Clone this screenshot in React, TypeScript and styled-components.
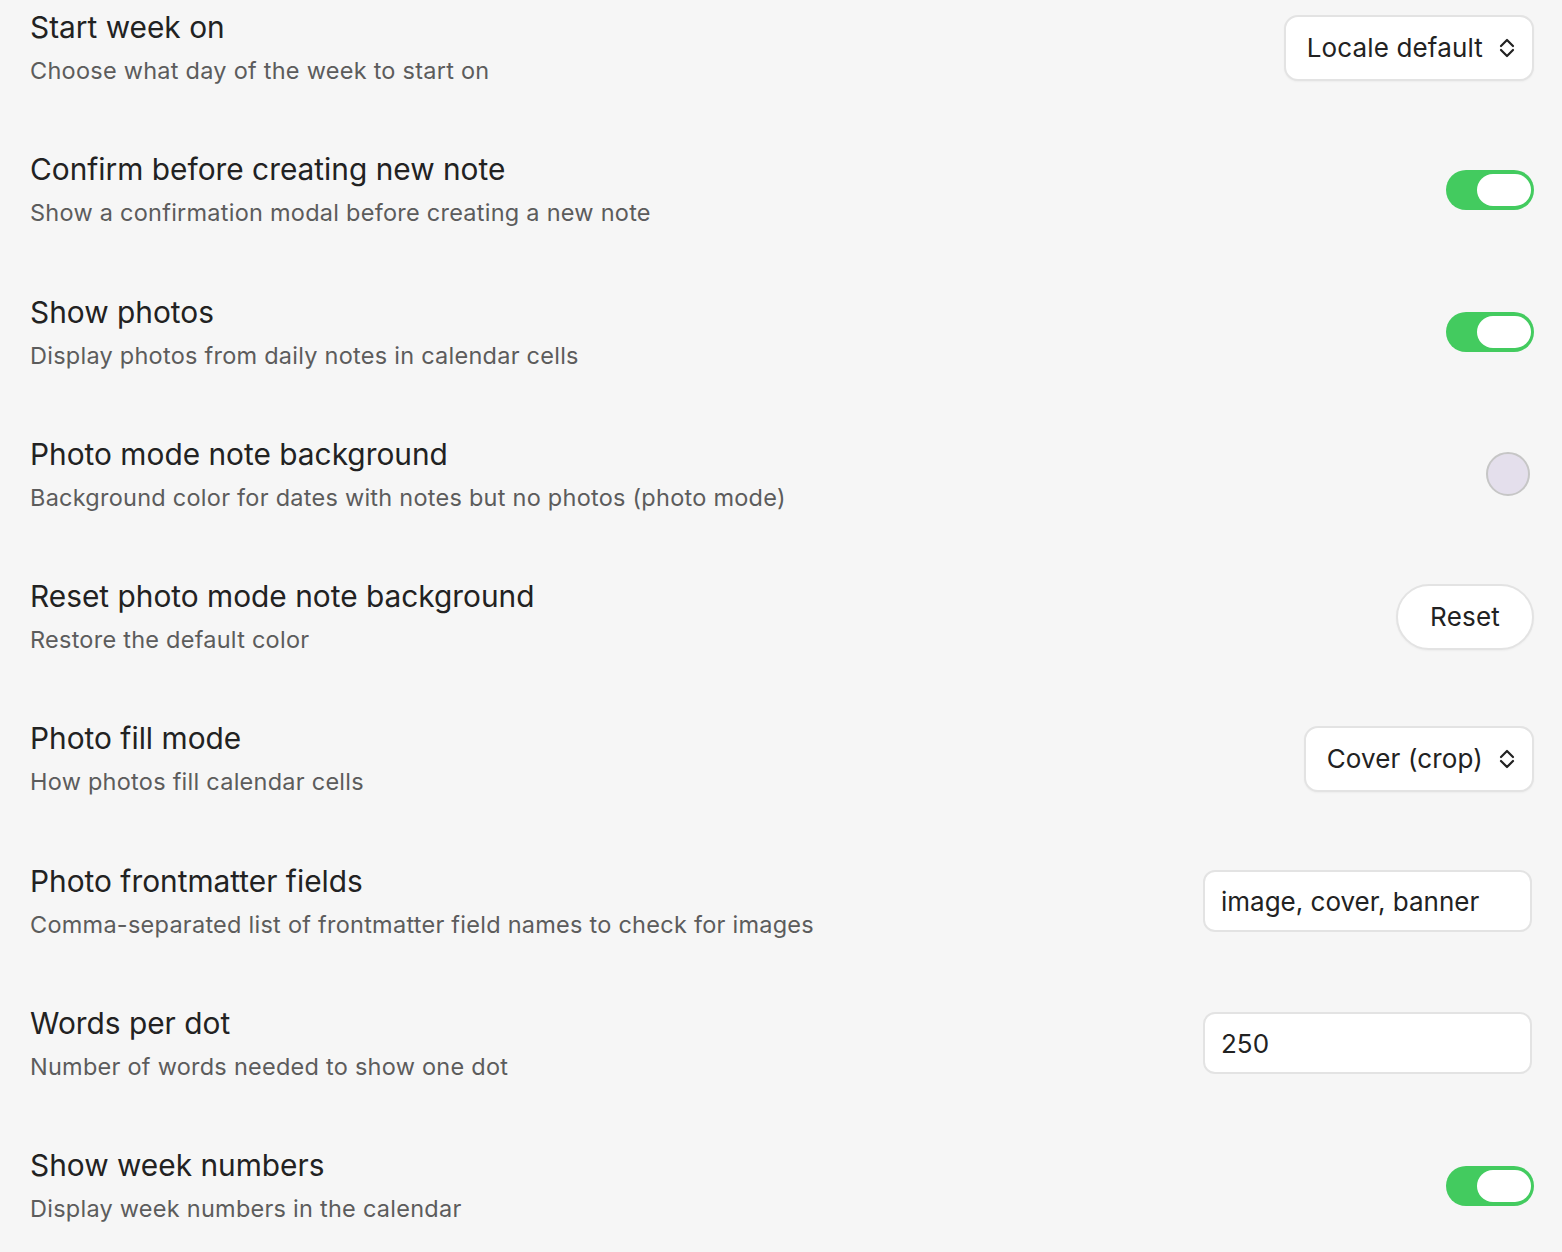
import React from "react";
import styled, { createGlobalStyle } from "styled-components";

const Global = createGlobalStyle`
  html, body { margin: 0; padding: 0; background: #f6f6f6; }
  body { font-family: Inter, "Noto Sans", "Liberation Sans", sans-serif; -webkit-font-smoothing: antialiased; }
`;

const Page = styled.div`
  display: flex;
  flex-direction: column;
  gap: 63.25px;
  padding: 8px 28px 40px 30px;
  background: #f6f6f6;
  min-height: 1252px;
  box-sizing: border-box;
`;

const Row = styled.div`
  display: flex;
  align-items: center;
  justify-content: space-between;
  gap: 24px;
`;

const Info = styled.div`
  display: flex;
  flex-direction: column;
  gap: 9px;
`;

const Title = styled.div`
  font-size: 29.85px;
  line-height: 38px;
  color: #222222;
`;

const Desc = styled.div`
  font-size: 23.5px;
  line-height: 32px;
  color: #5c5c5c;
  letter-spacing: 0.25px;
`;

const Select = styled.div`
  display: flex;
  align-items: center;
  gap: 16px;
  height: 66px;
  box-sizing: border-box;
  padding: 0 17px 0 21px;
  background: #ffffff;
  border: 2px solid #e3e3e3;
  border-radius: 14px;
  font-size: 26px;
  color: #222222;
  letter-spacing: 0.15px;
  box-shadow: 0 1px 2px rgba(0, 0, 0, 0.04);
`;

const Toggle = styled.div<{ $on: boolean }>`
  position: relative;
  width: 88px;
  height: 40px;
  border-radius: 20px;
  background: ${(p) => (p.$on ? "#43cb5f" : "#d6d6d6")};
  box-sizing: border-box;
`;

const Knob = styled.div<{ $on: boolean }>`
  position: absolute;
  top: 4px;
  ${(p) => (p.$on ? "right: 3px;" : "left: 3px;")}
  width: 54px;
  height: 32px;
  border-radius: 16px;
  background: #ffffff;
`;

const Swatch = styled.div`
  width: 44px;
  height: 44px;
  box-sizing: border-box;
  border-radius: 50%;
  background: #e4dfec;
  border: 2px solid #c6c6c6;
  margin-right: 4px;
`;

const Button = styled.button`
  height: 66px;
  padding: 0 32px;
  background: #ffffff;
  border: 2px solid #e3e3e3;
  border-radius: 33px;
  font-family: inherit;
  font-size: 26px;
  color: #222222;
  letter-spacing: 0.2px;
  box-shadow: 0 1px 2px rgba(0, 0, 0, 0.04);
`;

const Input = styled.input`
  width: 329px;
  height: 62px;
  box-sizing: border-box;
  padding: 0 16px;
  background: #ffffff;
  border: 2px solid #e3e3e3;
  border-radius: 12px;
  font-family: inherit;
  font-size: 26px;
  color: #222222;
  letter-spacing: 0;
  outline: none;
  margin-right: 2px;
`;

const Chevrons = () => (
  <svg width="16" height="24" viewBox="0 0 16 24" fill="none" stroke="#222" strokeWidth="2.2" strokeLinecap="round" strokeLinejoin="round">
    <path d="M2 10 L8 4 L14 10" />
    <path d="M2 14 L8 20 L14 14" />
  </svg>
);

type Control =
  | { kind: "select"; value: string }
  | { kind: "toggle"; on: boolean }
  | { kind: "swatch" }
  | { kind: "button"; label: string }
  | { kind: "input"; value: string };

const settings: { title: string; desc: string; control: Control }[] = [
  { title: "Start week on", desc: "Choose what day of the week to start on", control: { kind: "select", value: "Locale default" } },
  { title: "Confirm before creating new note", desc: "Show a confirmation modal before creating a new note", control: { kind: "toggle", on: true } },
  { title: "Show photos", desc: "Display photos from daily notes in calendar cells", control: { kind: "toggle", on: true } },
  { title: "Photo mode note background", desc: "Background color for dates with notes but no photos (photo mode)", control: { kind: "swatch" } },
  { title: "Reset photo mode note background", desc: "Restore the default color", control: { kind: "button", label: "Reset" } },
  { title: "Photo fill mode", desc: "How photos fill calendar cells", control: { kind: "select", value: "Cover (crop)" } },
  { title: "Photo frontmatter fields", desc: "Comma-separated list of frontmatter field names to check for images", control: { kind: "input", value: "image, cover, banner" } },
  { title: "Words per dot", desc: "Number of words needed to show one dot", control: { kind: "input", value: "250" } },
  { title: "Show week numbers", desc: "Display week numbers in the calendar", control: { kind: "toggle", on: true } },
];

const renderControl = (c: Control) => {
  switch (c.kind) {
    case "select":
      return (
        <Select>
          <span>{c.value}</span>
          <Chevrons />
        </Select>
      );
    case "toggle":
      return (
        <Toggle $on={c.on}>
          <Knob $on={c.on} />
        </Toggle>
      );
    case "swatch":
      return <Swatch />;
    case "button":
      return <Button>{c.label}</Button>;
    case "input":
      return <Input defaultValue={c.value} />;
  }
};

export default function App() {
  return (
    <>
      <Global />
      <Page>
        {settings.map((s) => (
          <Row key={s.title}>
            <Info>
              <Title>{s.title}</Title>
              <Desc>{s.desc}</Desc>
            </Info>
            {renderControl(s.control)}
          </Row>
        ))}
      </Page>
    </>
  );
}
